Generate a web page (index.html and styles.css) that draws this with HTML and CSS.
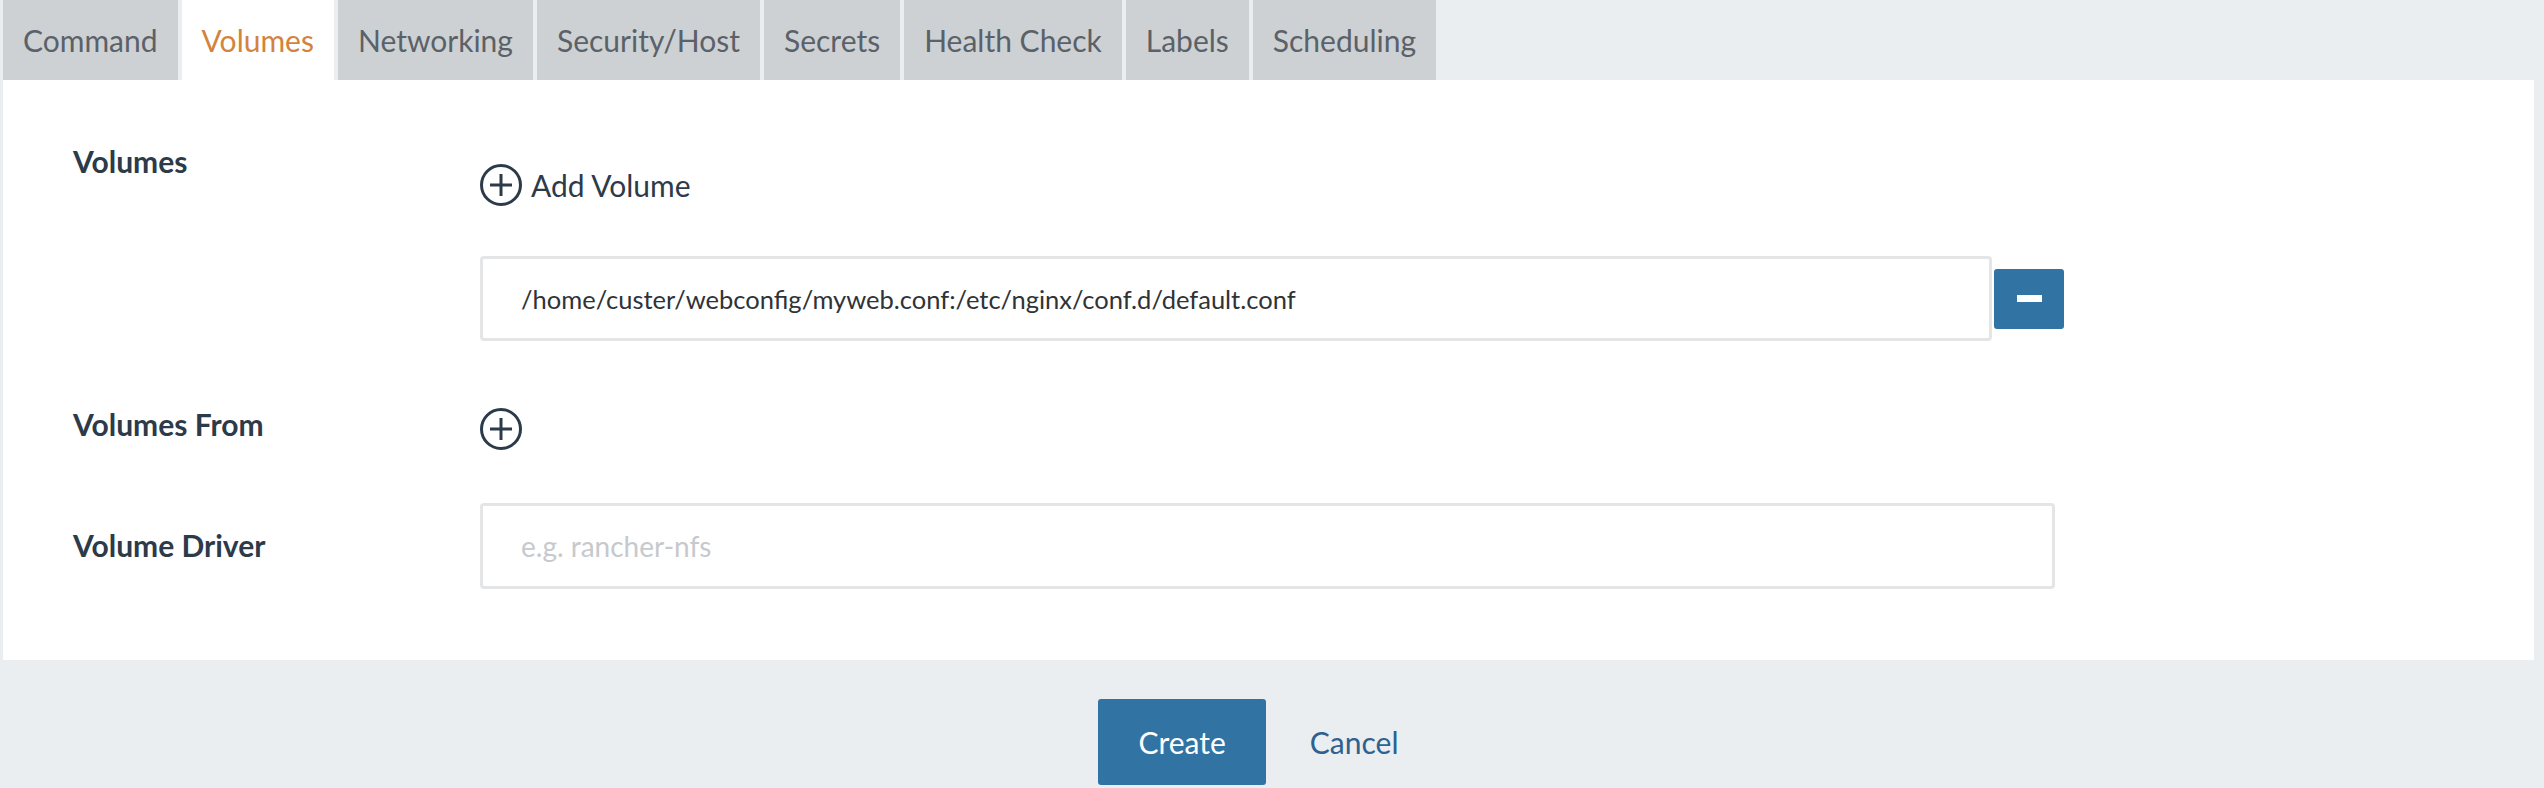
FILE: index.html
```html
<!DOCTYPE html>
<html>
<head>
<meta charset="utf-8">
<link rel="stylesheet" href="styles.css">
</head>
<body>
<div class="page">
  <nav class="tabs">
    <div class="tab">Command</div>
    <div class="tab active">Volumes</div>
    <div class="tab">Networking</div>
    <div class="tab">Security/Host</div>
    <div class="tab">Secrets</div>
    <div class="tab">Health Check</div>
    <div class="tab">Labels</div>
    <div class="tab">Scheduling</div>
  </nav>
  <section class="panel">
    <div class="row row-volumes">
      <div class="label">Volumes</div>
      <div class="control">
        <div class="add-btn">
          <svg class="plus-icon" width="42" height="42" viewBox="0 0 42 42"><circle cx="21" cy="21" r="19.5" fill="none" stroke="#2c3a4a" stroke-width="3"/><path d="M10 21H32M21 10V32" stroke="#2c3a4a" stroke-width="3" fill="none"/></svg>
          <span class="add-text">Add Volume</span>
        </div>
        <div class="input-group">
          <div class="input filled">/home/custer/webconfig/myweb.conf:/etc/nginx/conf.d/default.conf</div>
          <div class="remove-btn"><span class="minus"></span></div>
        </div>
      </div>
    </div>
    <div class="row row-from">
      <div class="label">Volumes From</div>
      <div class="control">
        <svg class="plus-icon" width="42" height="42" viewBox="0 0 42 42"><circle cx="21" cy="21" r="19.5" fill="none" stroke="#2c3a4a" stroke-width="3"/><path d="M10 21H32M21 10V32" stroke="#2c3a4a" stroke-width="3" fill="none"/></svg>
      </div>
    </div>
    <div class="row row-driver">
      <div class="label">Volume Driver</div>
      <div class="control">
        <div class="input driver placeholder">e.g. rancher-nfs</div>
      </div>
    </div>
  </section>
  <footer class="footer">
    <div class="btn primary">Create</div>
    <div class="btn link">Cancel</div>
  </footer>
</div>
</body>
</html>
```

FILE: styles.css
```css
html, body {
  margin: 0;
  padding: 0;
  background: #ebeef0;
  font-family: Lato, "Open Sans", sans-serif;
}
.page {
  padding: 0 10px 0 3px;
}
.tabs {
  display: flex;
  gap: 4px;
  height: 80px;
}
.tab {
  background: #cdd1d4;
  color: #5b6168;
  font-size: 30px;
  padding: 0 20px;
  display: flex;
  align-items: center;
  height: 80px;
  box-sizing: border-box;
}
.tab.active {
  background: #ffffff;
  color: #d4833c;
}
.panel {
  background: #ffffff;
  padding: 61px 0 71px 70px;
  height: 580px;
  box-sizing: border-box;
}
.row {
  display: flex;
  align-items: flex-start;
}
.label {
  width: 407px;
  flex: none;
  font-size: 30px;
  font-weight: 700;
  line-height: 40px;
  color: #2c3a4a;
}
.control {
  display: flex;
  flex-direction: column;
}
.add-btn {
  display: flex;
  align-items: center;
  gap: 9px;
  margin-top: 23px;
  height: 42px;
}
.add-text {
  font-size: 30px;
  color: #2c3a4a;
}
.plus-icon {
  display: block;
  flex: none;
}
.input-group {
  display: flex;
  align-items: center;
  margin-top: 50px;
}
.input {
  box-sizing: border-box;
  height: 85px;
  border: 3px solid #e4e5e6;
  border-radius: 4px;
  padding: 0 38px;
  display: flex;
  align-items: center;
  font-size: 25.5px;
  color: #2f3337;
  background: #fff;
}
.input.filled {
  width: 1512px;
}
.input.driver {
  width: 1575px;
  height: 86px;
}
.input.placeholder {
  color: #c6c9cd;
  font-size: 28px;
}
.remove-btn {
  width: 70px;
  height: 60px;
  margin-left: 2px;
  background: #3174a3;
  border-radius: 3px;
  display: flex;
  align-items: center;
  justify-content: center;
}
.minus {
  width: 25px;
  height: 7px;
  background: #ffffff;
}
.row-from {
  margin-top: 63px;
}
.row-from .plus-icon {
  margin-top: 4px;
}
.row-driver {
  margin-top: 53px;
}
.row-driver .label {
  margin-top: 22px;
}
.footer {
  display: flex;
  justify-content: center;
  gap: 4px;
  padding-top: 39px;
}
.btn {
  height: 86px;
  padding: 0 40px;
  display: flex;
  align-items: center;
  font-size: 30px;
  border-radius: 3px;
}
.btn.primary {
  background: #3174a3;
  color: #ffffff;
}
.btn.link {
  color: #2e6190;
}
```
